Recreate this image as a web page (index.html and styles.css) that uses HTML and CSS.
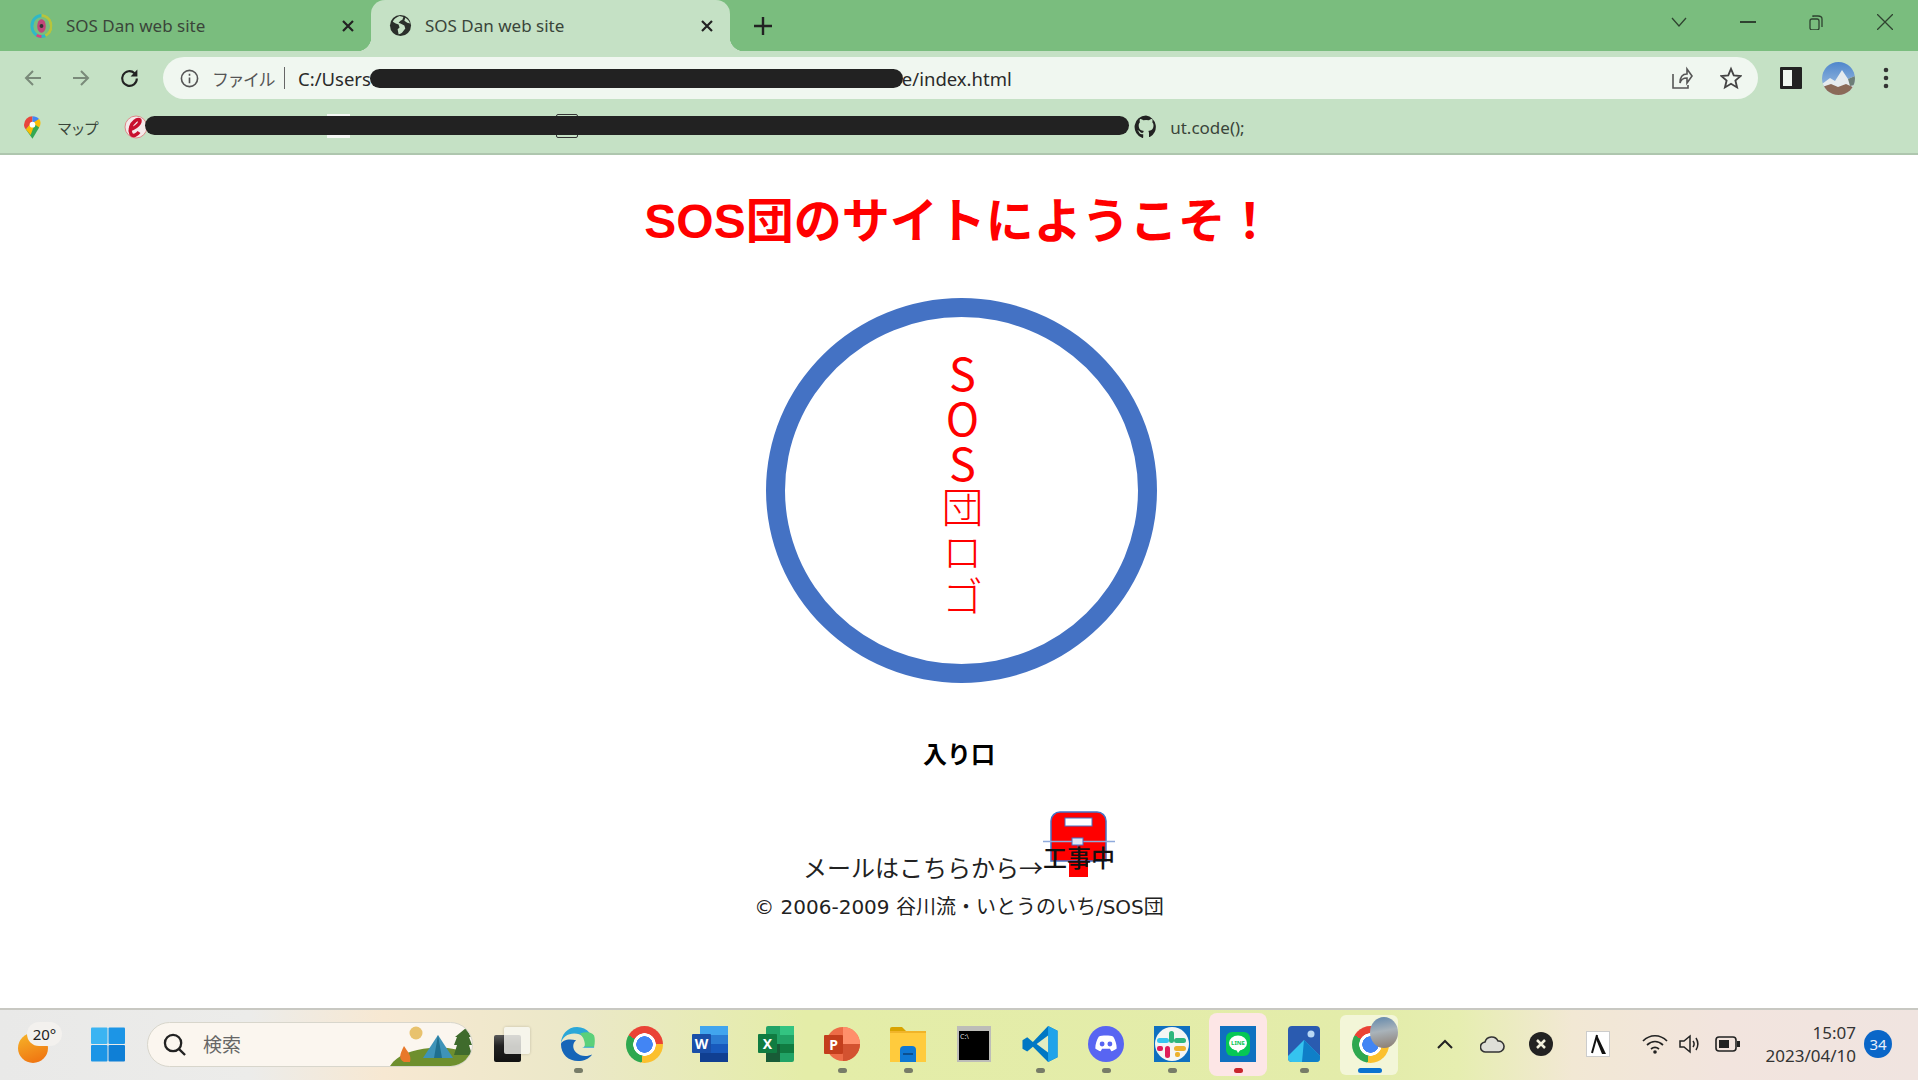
FILE: index.html
```html
<!DOCTYPE html>
<html lang="ja">
<head>
<meta charset="utf-8">
<title>SOS Dan web site</title>
<link rel="stylesheet" href="styles.css">
</head>
<body>
<header class="browser">
  <div class="tabstrip">
    <div class="tab tab-idle">
      <svg class="favicon" viewBox="0 0 24 24"><ellipse cx="12" cy="12" rx="10" ry="11" fill="none" stroke="#2fb8c8" stroke-width="3"/><path d="M12 1a10 11 0 0 1 10 11 10 11 0 0 1-6 10" fill="none" stroke="#b8c43c" stroke-width="3"/><path d="M12 23a10 11 0 0 1-5-1.500" fill="none" stroke="#e0407a" stroke-width="3"/><ellipse cx="12" cy="12" rx="4.500" ry="7" fill="#c2477a"/><circle cx="12" cy="12" r="2" fill="#333"/></svg>
      <span class="tab-title">SOS Dan web site</span>
      <svg class="tab-close" viewBox="0 0 14 14"><path d="M2 2l10 10M12 2L2 12"/></svg>
    </div>
    <div class="tab tab-active">
      <svg class="favicon favicon-globe" viewBox="0 0 24 24"><circle cx="12" cy="12" r="11" fill="#2b2f2b"/><path d="M11 2c-3 1-6 3-7 6l3 2 3 1 1 3-2 2 1 5c2 0 3-1 4-2l3-4-1-3-4-2-2-1 2-2 2-1 1-3zM17 4l-1 3 3 2 3 1c-1-3-3-5-5-6z" fill="#c5e1c5"/></svg>
      <span class="tab-title">SOS Dan web site</span>
      <svg class="tab-close" viewBox="0 0 14 14"><path d="M2 2l10 10M12 2L2 12"/></svg>
    </div>
    <svg class="new-tab" viewBox="0 0 18 18"><path d="M9 0v18M0 9h18"/></svg>
    <div class="window-controls">
      <span class="win-btn"><svg viewBox="0 0 16 16"><path d="M1 4l7 8 7-8"/></svg></span>
      <span class="win-btn"><svg viewBox="0 0 16 16"><path class="thick" d="M0 8h16"/></svg></span>
      <span class="win-btn"><svg viewBox="0 0 16 16"><rect x="2" y="5" width="9" height="11" rx="2"/><path d="M5 3V2h5c3 0 4 1 4 3v8"/></svg></span>
      <span class="win-btn"><svg viewBox="0 0 16 16"><path d="M0 0l16 16M16 0L0 16"/></svg></span>
    </div>
  </div>
  <div class="toolbar">
    <svg class="nav-icon nav-off" viewBox="0 0 20 20"><path d="M18 10H3M10 3l-7 7 7 7"/></svg>
    <svg class="nav-icon nav-off" viewBox="0 0 20 20"><path d="M2 10h15M10 3l7 7-7 7"/></svg>
    <svg class="nav-icon nav-on" viewBox="0 0 20 20"><path d="M17 10a7 7 0 1 1-2.200-5.100"/><path class="fill" d="M17.500 1.500v6.500h-6.500z"/></svg>
    <div class="omnibox">
      <svg class="info" viewBox="0 0 20 20"><circle cx="10" cy="10" r="8.500"/><path d="M10 9v6M10 5v2"/></svg>
      <span class="scheme">ファイル</span>
      <span class="omni-sep"></span>
      <span class="url">C:/Users<span class="url-gap"></span>e/index.html</span>
      <span class="redact redact-url"></span>
      <svg class="omni-icon share" viewBox="0 0 22 24"><path d="M2 8v14h15v-3M9 17c0-6 3-9 7-9V3l5 7-5 7v-5c-3 0-6 1-7 5z"/></svg>
      <svg class="omni-icon star" viewBox="0 0 24 24"><path d="M12 2l3 7.200 7.600.6-5.800 5 1.800 7.500L12 18.300l-6.600 4 1.800-7.500-5.800-5 7.600-.6z"/></svg>
    </div>
    <svg class="panel" viewBox="0 0 22 22"><rect x="0" y="0" width="22" height="22" rx="1" fill="#222"/><rect x="3" y="3" width="9" height="16" fill="#f0f7f0"/></svg>
    <svg class="avatar" viewBox="0 0 33 33"><defs><linearGradient id="sky" x1="0" y1="0" x2="0" y2="1"><stop offset="0" stop-color="#4f86cc"/><stop offset="1" stop-color="#a9c6e4"/></linearGradient></defs><rect width="33" height="33" fill="url(#sky)"/><path d="M0 22l8-6 5 3 7-11 6 9 7-3v19H0z" fill="#e6ebee"/><path d="M0 25l9-3 7 3 8-3 9 4v7H0z" fill="#8a6a58"/><path d="M26 17l7-3v9l-5 1z" fill="#6d7f78"/></svg>
    <svg class="menu-dots" viewBox="0 0 6 22"><circle cx="3" cy="3" r="2.300"/><circle cx="3" cy="11" r="2.300"/><circle cx="3" cy="19" r="2.300"/></svg>
  </div>
  <div class="bookmarks">
    <svg class="bm-maps" viewBox="0 0 18 24"><path d="M9 0a9 9 0 0 0-9 9c0 2 1 4 2 5l7-8z" fill="#e8453c"/><path d="M9 0c3 0 5 1 7 3l-7 6z" fill="#4285f4"/><path d="M16 3c2 2 2 6 0 9l-4 4-6-7z" fill="#fbbc04"/><path d="M2 14l7-7 7 5-7 12z" fill="#34a853"/><path d="M2 14l5-6 3 4-3 8z" fill="#fbbc04"/><circle cx="9" cy="9" r="3" fill="#fff"/></svg>
    <span class="bm-label">マップ</span>
    <svg class="bm-e" viewBox="0 0 24 24"><circle cx="12" cy="12" r="11" fill="#f4eaea" stroke="#d88" stroke-width="1"/><path d="M5 15c4-1 11-5 11-9 0-2-3-2-5 0-4 3-6 9-4 13 2 3 6 1 8-2" fill="none" stroke="#c8102e" stroke-width="3.500"/></svg>
    <span class="scrap scrap-white"></span>
    <span class="scrap scrap-dark"></span>
    <span class="redact redact-bm"></span>
    <svg class="bm-github" viewBox="0 0 24 24"><path d="M12 .5A11.500 11.500 0 0 0 8.400 22.900c.6.100.8-.2.800-.6v-3.100c-3.200.7-3.900-1.400-3.900-1.400-.5-1.300-1.300-1.700-1.300-1.700-1-.7.100-.7.100-.7 1.200.1 1.800 1.200 1.800 1.200 1 1.800 2.700 1.300 3.300 1 .1-.8.400-1.300.8-1.600-2.600-.3-5.300-1.300-5.300-5.700 0-1.300.5-2.300 1.200-3.100-.1-.3-.5-1.500.1-3.100 0 0 1-.3 3.200 1.200a11 11 0 0 1 5.800 0c2.200-1.500 3.200-1.200 3.200-1.200.6 1.600.2 2.800.1 3.100.7.800 1.200 1.800 1.200 3.100 0 4.400-2.700 5.400-5.300 5.700.4.400.8 1.100.8 2.200v3.200c0 .3.200.7.800.6A11.500 11.500 0 0 0 12 .5z" fill="#222"/></svg>
    <span class="bm-label bm-last">ut.code();</span>
  </div>
</header>

<main class="page">
  <h1 class="headline">SOS団のサイトにようこそ&#xFF01;</h1>
  <div class="logo"><p class="logo-text"><span class="logo-latin">SOS</span>団ロゴ</p></div>
  <p class="entrance">入り口</p>
  <p class="mail">メールはこちらから→<svg class="postbox" viewBox="0 0 72 66"><path d="M26 50h19v16H26z" fill="#f00"/><path d="M8 10a9 9 0 0 1 9-9h37a9 9 0 0 1 9 9v40H8z" fill="#f00" stroke="#4472c4" stroke-width="1.500"/><rect x="22" y="7" width="27" height="8" fill="#fff" stroke="#4472c4"/><path d="M0 30.500h72" stroke="#8faadc" stroke-width="1.500"/><rect x="29" y="27" width="11" height="7" fill="#dfe6f4" stroke="#4472c4"/><path d="M35 34v8" stroke="#4472c4"/><text class="postbox-text" x="36" y="56">工事中</text></svg></p>
  <p class="copyright">© 2006-2009 谷川流・いとうのいち/SOS団</p>
</main>

<footer class="taskbar">
  <div class="weather"><span class="sun"></span><span class="temp">20°</span></div>
  <svg class="win-logo" viewBox="0 0 34 34"><rect width="16.500" height="16.500" rx="1" fill="#3bb4f2"/><rect x="17.500" width="16.500" height="16.500" rx="1" fill="#1c95e6"/><rect y="17.500" width="16.500" height="16.500" rx="1" fill="#1c95e6"/><rect x="17.500" y="17.500" width="16.500" height="16.500" rx="1" fill="#0f7fd6"/></svg>
  <div class="search">
    <svg class="search-icon" viewBox="0 0 24 24"><circle cx="10.500" cy="10.500" r="8.500"/><path d="M16.500 16.500L23 23"/></svg>
    <span class="search-text">検索</span>
    <svg class="search-art" viewBox="0 0 82 42"><path d="M0 42C8 30 22 26 40 24c16-2 30 2 42 6v4c-4 6-10 8-16 8z" fill="#6e8f2e"/><circle cx="26" cy="9" r="6.500" fill="#e8c26e"/><path d="M14 38c-6-3-4-8 0-16 3 5 8 9 6 16z" fill="#e8782a"/><path d="M33 34L48 11l15 23z" fill="#3e93b8"/><path d="M44 34l4-23 4 23z" fill="#1f6f8f"/><path d="M76 4l5 9h-2l3 8h-3l3 10H64l3-10h-3l3-8h-2z" fill="#3f6b2c"/></svg>
  </div>
  <div class="taskview"><span class="tv-front"></span><span class="tv-back"></span></div>
  <div class="apps">
    <div class="app"><svg class="ico" viewBox="0 0 38 38"><path d="M36 22C36 10 29 1 18 1 8 1 1 9 1 19c1-7 7-11 14-11 8 0 12 5 12 10 0 3-2 5-4 5h13z" fill="#2ba7d8"/><path d="M36 10c1 3 1 8 0 12H26c1-4-1-10-5-14 6-2 12-2 15 2z" fill="#5bd07a"/><path d="M1 19c0 11 8 18 18 18 6 0 11-2 15-7-4 2-12 3-17-2-4-4-4-10 0-13-8-2-15 0-16 4z" fill="#1565b8"/></svg><i class="dot"></i></div>
    <div class="app"><span class="chrome"></span></div>
    <div class="app"><svg class="ico" viewBox="0 0 36 36"><rect x="8" width="28" height="36" rx="2" fill="#2b7cd3"/><rect x="8" width="28" height="9" fill="#41a5ee"/><rect x="8" y="18" width="28" height="9" fill="#185abd"/><rect x="8" y="27" width="28" height="9" fill="#103f91"/><rect y="8" width="19" height="19" rx="1" fill="#1a4fa8"/><text class="ico-letter" x="9.500" y="23">W</text></svg></div>
    <div class="app"><svg class="ico" viewBox="0 0 36 36"><rect x="8" width="28" height="36" rx="2" fill="#21a366"/><rect x="22" width="14" height="9" fill="#33c481"/><rect x="8" y="18" width="14" height="18" fill="#185c37"/><rect x="22" y="18" width="14" height="9" fill="#107c41"/><rect y="8" width="19" height="19" rx="1" fill="#107c41"/><text class="ico-letter" x="9.500" y="23">X</text></svg></div>
    <div class="app"><svg class="ico" viewBox="0 0 36 36"><circle cx="19" cy="18" r="17" fill="#ed6c47"/><path d="M19 1a17 17 0 0 1 17 17H19z" fill="#ff8f6b"/><path d="M36 18a17 17 0 0 1-17 17V18z" fill="#d35230"/><rect y="9" width="19" height="19" rx="1" fill="#c43e1c"/><text class="ico-letter" x="9.500" y="24">P</text></svg><i class="dot"></i></div>
    <div class="app"><svg class="ico" viewBox="0 0 36 36"><path d="M0 3a2 2 0 0 1 2-2h10l4 4h-16z" fill="#d9a300"/><path d="M0 5h36v31H0z" fill="#ffcb3d"/><path d="M0 5h36v2H0z" fill="#f0b429"/><path d="M10 36v-12a4 4 0 0 1 4-4h8a4 4 0 0 1 4 4v12z" fill="#0f78d4"/><rect x="13" y="27" width="10" height="2" fill="#0b4f90"/></svg><i class="dot"></i></div>
    <div class="app"><svg class="ico ico-term" viewBox="0 0 34 36"><rect width="34" height="36" fill="#bdbdb8"/><rect x="2" y="5" width="30" height="29" fill="#000"/><text class="term-text" x="3" y="13">C:\</text></svg></div>
    <div class="app"><svg class="ico" viewBox="0 0 37 38"><path d="M27 0l10 5v28l-10 5L11 22l-6 5-5-3v-9l5-3 6 5z" fill="#0078c4"/><path d="M27 0l10 5v28l-10 5z" fill="#1fa3ea"/><path d="M27 10L15 19l12 9z" fill="#e3edc2"/></svg><i class="dot"></i></div>
    <div class="app"><svg class="ico" viewBox="0 0 37 37"><circle cx="18.500" cy="18.500" r="18.500" fill="#5865f2"/><path d="M11 11c3-1.500 12-1.500 15 0 2 3 3.500 8 3.500 12-2 1.500-4 2.500-5.500 3l-1.500-2.500h-8L13 26c-1.500-.5-3.500-1.500-5.500-3 0-4 1.500-9 3.500-12z" fill="#fff"/><circle cx="14.500" cy="18.500" r="2.500" fill="#5865f2"/><circle cx="22.500" cy="18.500" r="2.500" fill="#5865f2"/></svg><i class="dot"></i></div>
    <div class="app"><svg class="ico" viewBox="0 0 36 36"><rect width="36" height="36" fill="#0f70c0"/><circle cx="18" cy="18" r="17" fill="#f4f6f4"/><rect x="15" y="5" width="5" height="12" rx="2.500" fill="#2eb67d"/><rect x="20" y="12" width="12" height="5" rx="2.500" fill="#2eb67d"/><rect x="20" y="20" width="12" height="5" rx="2.500" fill="#ecb22e"/><rect x="21" y="26" width="5" height="5" rx="2" fill="#ecb22e"/><rect x="11" y="20" width="5" height="12" rx="2.500" fill="#e01e5a"/><rect x="3" y="20" width="6" height="5" rx="2" fill="#e01e5a"/><rect x="3" y="12" width="12" height="5" rx="2.500" fill="#36c5f0"/></svg><i class="dot"></i></div>
    <div class="app app-alert"><svg class="ico" viewBox="0 0 36 36"><rect width="36" height="36" fill="#0f70c0"/><rect x="6" y="6" width="24" height="24" rx="6" fill="#06c755"/><ellipse cx="18" cy="17" rx="9" ry="7.500" fill="#fff"/><path d="M16 23l2 4 3-4z" fill="#fff"/><text class="line-text" x="18" y="19">LINE</text></svg><i class="dot dot-alert"></i></div>
    <div class="app"><svg class="ico ico-photos" viewBox="0 0 32 36"><rect width="32" height="36" rx="4" fill="#2a5bb0"/><circle cx="23" cy="8" r="3.500" fill="#b9d8f5"/><path d="M0 30L16 14l16 16v2a4 4 0 0 1-4 4H4a4 4 0 0 1-4-4z" fill="#35c3ef"/><path d="M16 14l16 16v2a4 4 0 0 1-4 4H14z" fill="#0f7fc8"/></svg><i class="dot"></i></div>
    <div class="app app-open"><span class="chrome"></span><span class="chrome-avatar"></span><i class="dot dot-open"></i></div>
  </div>
  <svg class="tray tray-caret" viewBox="0 0 16 10"><path d="M1 9l7-7 7 7"/></svg>
  <svg class="tray tray-cloud" viewBox="0 0 25 17"><path d="M6 16a5 5 0 0 1-1-10 7 7 0 0 1 13-1 5.500 5.500 0 0 1 1 11z" fill="#dfdfd8" stroke="#333" stroke-width="1.600"/></svg>
  <svg class="tray tray-x" viewBox="0 0 24 24"><circle cx="12" cy="12" r="12" fill="#222"/><path d="M8 8l8 8M16 8l-8 8" stroke="#f0eedd" stroke-width="2.500"/></svg>
  <svg class="tray tray-lambda" viewBox="0 0 24 26"><rect x=".5" y=".5" width="23" height="25" fill="#fff" stroke="#ccc"/><path d="M6 22L11 4" stroke="#111" stroke-width="2"/><path d="M11 4l9 19h-4L10 8z" fill="#111"/></svg>
  <svg class="tray tray-wifi" viewBox="0 0 26 20"><path d="M1 7c7-7 17-7 24 0M5 11c5-4.500 11-4.500 16 0M9 15c2.500-2 5.500-2 8 0"/><circle class="fill" cx="13" cy="18" r="1.800"/></svg>
  <svg class="tray tray-vol" viewBox="0 0 23 20"><path d="M1 7v6h4l6 5V2L5 7zM14 7c1.500 2 1.500 4 0 6M17 4c2.500 4 2.500 8 0 12"/></svg>
  <svg class="tray tray-bat" viewBox="0 0 25 16"><rect x="1" y="1" width="20" height="14" rx="3" fill="none" stroke="#222" stroke-width="1.600"/><rect x="4" y="4" width="10" height="8" fill="#222"/><rect x="22" y="5" width="3" height="6" fill="#222"/></svg>
  <div class="clock"><span>15:07</span><span>2023/04/10</span></div>
  <span class="badge">34</span>
</footer>
</body>
</html>
```

FILE: styles.css
```css
* { box-sizing: border-box; }
html, body { margin: 0; height: 100%; }
body {
  width: 1918px;
  height: 1080px;
  overflow: hidden;
  display: flex;
  flex-direction: column;
  background: #fff;
  font-family: "Noto Sans CJK JP", sans-serif;
  color: #111;
}
svg { display: block; flex: none; }

/* browser chrome */
.browser { flex: none; height: 155px; background: #c5e1c5; border-bottom: 2px solid #aec6ae; font-family: "Noto Sans", "Noto Sans CJK JP", sans-serif; color: #3a453a; }
.tabstrip { height: 51px; background: #7abd7e; display: flex; align-items: center; }
.tab { height: 51px; display: flex; align-items: center; position: relative; padding-right: 16px; }
.tab-idle { width: 371px; padding-left: 30px; }
.tab-active { width: 359px; padding-left: 19px; background: #c5e1c5; border-radius: 14px 14px 0 0; }
.tab-active::before, .tab-active::after { content: ""; position: absolute; bottom: 0; width: 14px; height: 14px; }
.tab-active::before { left: -14px; background: radial-gradient(circle at 0 0, #7abd7e 14px, #c5e1c5 14.500px); }
.tab-active::after { right: -14px; background: radial-gradient(circle at 100% 0, #7abd7e 14px, #c5e1c5 14.500px); }
.favicon { width: 23px; height: 24px; margin-right: 13px; }
.favicon-globe { width: 23px; height: 23px; margin-right: 13px; margin-left: -1px; }
.tab-title { font-size: 17px; flex: 1; white-space: nowrap; }
.tab-close { width: 14px; height: 14px; fill: none; stroke: #222; stroke-width: 2.200; }
.new-tab { width: 18px; height: 18px; margin-left: 24px; fill: none; stroke: #222; stroke-width: 2.400; }
.window-controls { margin-left: auto; margin-right: -1px; display: flex; align-self: flex-start; }
.win-btn { width: 68.500px; height: 44px; display: flex; align-items: center; justify-content: center; }
.win-btn svg { width: 16px; height: 16px; fill: none; stroke: #2f4330; stroke-width: 1.300; }
.win-btn .thick { stroke-width: 2; }

.toolbar { height: 54px; display: flex; align-items: center; padding-left: 23px; }
.nav-icon { width: 20px; height: 20px; fill: none; stroke-width: 2; margin-right: 28px; }
.nav-off { stroke: #7a8a7a; }
.nav-on { stroke: #222; margin-right: 0; width: 21px; height: 21px; }
.nav-on .fill { fill: #222; stroke: none; }
.omnibox { position: relative; margin-left: 23px; width: 1595px; height: 42px; border-radius: 21px; background: #f0f7f0; display: flex; align-items: center; padding-left: 17px; font-size: 18.500px; }
.info { width: 19px; height: 19px; fill: none; stroke: #555; stroke-width: 1.700; margin-right: 13px; }
.scheme { color: #555; width: 59px; font-size: 17px; white-space: nowrap; letter-spacing: -1.500px; }
.omni-sep { width: 1px; height: 22px; background: #666; margin: 0 13px 0 13px; }
.url { color: #2a2a2a; white-space: nowrap; }
.url-gap { display: inline-block; width: 531px; }
.redact { position: absolute; display: block; background: #222; border-radius: 10px; }
.redact-url { left: 207px; top: 12px; width: 533px; height: 19px; }
.omni-icon { width: 22px; height: 24px; fill: none; stroke: #555; stroke-width: 1.600; }
.share { margin-left: auto; margin-right: 27px; }
.star { margin-right: 16px; stroke: #444; stroke-width: 2; }
.panel { width: 22px; height: 22px; margin-left: 22px; }
.avatar { width: 33px; height: 33px; border-radius: 50%; margin-left: 20px; }
.menu-dots { width: 6px; height: 22px; margin-left: 28px; fill: #333; }

.bookmarks { height: 46px; padding-bottom: 2px; display: flex; align-items: center; padding-left: 24px; position: relative; }
.bm-maps { width: 17px; height: 23px; }
.bm-label { font-size: 15px; margin-left: 16px; letter-spacing: -1.600px; white-space: nowrap; }
.bm-e { width: 24px; height: 24px; margin-left: 27px; }
.redact-bm { left: 145px; top: 11px; width: 984px; height: 19px; }
.scrap { position: absolute; top: 9px; height: 24px; }
.scrap-white { left: 327px; width: 23px; background: #f4f8f4; }
.scrap-dark { left: 556px; width: 22px; border: 1.500px solid #333; border-radius: 2px; }
.bm-github { width: 24px; height: 24px; margin-left: 986px; }
.bm-last { font-size: 17px; margin-left: 12px; letter-spacing: 0; }

/* page */
.page { height: 853px; flex: none; display: flex; flex-direction: column; align-items: center; }
.headline { margin: 32px 0 0; font-family: "Liberation Sans", "Noto Sans CJK JP", sans-serif; font-size: 48px; line-height: 70px; font-weight: 700; color: #f00; white-space: nowrap; }
.logo { width: 391px; height: 385px; margin: 41px 0 0 4px; border: 19px solid #4472c4; border-radius: 50%; display: flex; align-items: center; justify-content: center; }
.logo-text { margin: 0 0 0 2px; padding-bottom: 10px; writing-mode: vertical-rl; text-orientation: upright; font-size: 42px; line-height: 46px; font-weight: 300; letter-spacing: 3px; color: #f00; }
.logo-latin { font-size: 45px; font-weight: 400; letter-spacing: 0; }
.entrance { margin: 52px 0 0; font-size: 24px; line-height: 36px; font-weight: 700; color: #000; }
.mail { margin: 40px 0 0; font-size: 24px; line-height: 34px; white-space: nowrap; color: #222; }
.postbox { display: inline-block; width: 72px; height: 66px; vertical-align: baseline; }
.postbox-text { font-size: 24px; text-anchor: middle; fill: #111; font-weight: 500; }
.copyright { margin: 8px 0 0; font-family: "DejaVu Sans", "Noto Sans CJK JP", sans-serif; font-size: 20px; line-height: 30px; white-space: nowrap; color: #222; }

/* taskbar */
.taskbar { flex: none; height: 72px; padding-bottom: 2px; border-top: 2px solid #c8c8c2; display: flex; align-items: center; font-family: "Noto Sans", "Noto Sans CJK JP", sans-serif; background: linear-gradient(90deg, #e9e9e8 0, #ececea 13%, #f7e8d2 20%, #ebe8c8 30%, #e4eda8 42%, #e3ecaa 72%, #e6eeb0 76%, #f2e8d4 82%, #f2e4de 90%, #f0e4e0 100%); }
.weather { width: 63px; margin-left: 18px; height: 45px; position: relative; }
.sun { position: absolute; left: 0; top: 11px; width: 30px; height: 30px; border-radius: 50%; background: linear-gradient(160deg, #f6b62a, #ef6d0e); }
.temp { position: absolute; left: 9px; top: 0; width: 35px; height: 24px; border-radius: 12px; background: #f3f1ee; font-size: 15px; line-height: 24px; text-align: center; color: #222; }
.win-logo { width: 34px; height: 35px; margin-left: 10px; }
.search { width: 326px; height: 45px; margin-left: 22px; border-radius: 23px; background: #fbf6ef; border: 1px solid #d8d6cc; display: flex; align-items: center; padding-left: 16px; overflow: hidden; }
.search-icon { width: 23px; height: 23px; margin-left: -1px; fill: none; stroke: #222; stroke-width: 2.400; }
.search-text { font-size: 19px; color: #666; margin-left: 17px; }
.search-art { width: 82px; height: 42px; margin-left: auto; align-self: flex-end; }
.taskview { width: 36px; height: 35px; margin-left: 21px; position: relative; }
.tv-back { position: absolute; right: 0; top: 0; width: 26px; height: 27px; background: rgba(248, 247, 242, .8); box-shadow: 0 0 3px rgba(0, 0, 0, .2); border-radius: 2px; }
.tv-front { position: absolute; left: 0; bottom: 0; width: 27px; height: 27px; background: linear-gradient(180deg, #5a5a5a 0, #222 40%, #111 100%); border-radius: 2px; }
.apps { display: flex; margin-left: 15px; height: 100%; }
.app { width: 66px; height: 100%; position: relative; display: flex; align-items: center; justify-content: center; }
.ico { width: 36px; height: 36px; }
.ico-term { width: 34px; }
.ico-photos { width: 32px; }
.ico-letter { font-size: 14px; font-weight: 700; fill: #fff; text-anchor: middle; }
.term-text { font-size: 7px; fill: #ddd; }
.line-text { font-size: 6px; font-weight: 700; fill: #06c755; text-anchor: middle; }
.dot { position: absolute; left: 50%; bottom: 5px; width: 9px; height: 5px; margin-left: -4.500px; border-radius: 3px; background: #777c68; }
.dot-alert { background: #c8242c; }
.dot-open { width: 24px; margin-left: -12px; background: #0a73d0; }
.app-alert::before { content: ""; position: absolute; left: 4px; right: 4px; top: 3px; bottom: 2px; background: #fde6e6; border-radius: 8px; }
.app-open::before { content: ""; position: absolute; left: 3px; right: 5px; top: 5px; bottom: 3px; background: #f3f6d8; border-radius: 6px; }
.app .ico, .app .chrome { position: relative; }
.chrome { width: 37px; height: 37px; border-radius: 50%; background: radial-gradient(circle, #4285f4 0 8px, #fff 8.500px 11px, transparent 11.500px), conic-gradient(from 300deg, #ea4335 0 150deg, #fbc02d 150deg 250deg, #2ea84f 250deg 360deg); }
.chrome-avatar { position: absolute; right: 5px; top: 7px; width: 28px; height: 31px; border-radius: 50%; background: linear-gradient(170deg, #5f86ab 0, #a9b3ba 45%, #8a7a6e 100%); }
.tray { flex: none; }
.tray-caret { width: 16px; height: 10px; margin-left: 34px; fill: none; stroke: #222; stroke-width: 2; }
.tray-cloud { width: 25px; height: 17px; margin-left: 27px; }
.tray-x { width: 24px; height: 24px; margin-left: 24px; }
.tray-lambda { width: 24px; height: 26px; margin-left: 33px; }
.tray-wifi { width: 26px; height: 20px; margin-left: 32px; fill: none; stroke: #222; stroke-width: 1.700; }
.tray-wifi .fill { fill: #222; stroke: none; }
.tray-vol { width: 23px; height: 20px; margin-left: 11px; fill: none; stroke: #222; stroke-width: 1.500; }
.tray-bat { width: 25px; height: 16px; margin-left: 13px; }
.clock { width: 92px; margin-left: 24px; display: flex; flex-direction: column; align-items: flex-end; font-size: 17px; line-height: 23px; color: #333; }
.badge { width: 28px; height: 28px; margin-left: 8px; border-radius: 50%; background: #0a66c8; color: #e8f0fa; font-size: 15px; line-height: 28px; text-align: center; }
```
